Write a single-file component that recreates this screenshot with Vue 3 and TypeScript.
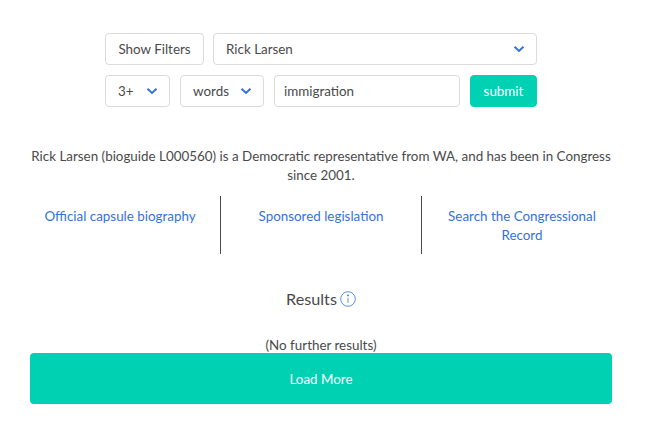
<template>
  <main class="page">
    <form class="search" @submit.prevent>
      <div class="row">
        <button type="button" class="btn filters">Show Filters</button>
        <div class="select grow">
          <span>Rick Larsen</span>
          <svg class="chev" viewBox="0 0 12 8"><path d="M1.5 1.8 6 6l4.5-4.2" /></svg>
        </div>
      </div>
      <div class="row wide">
        <div class="select count">
          <span>3+</span>
          <svg class="chev" viewBox="0 0 12 8"><path d="M1.5 1.8 6 6l4.5-4.2" /></svg>
        </div>
        <div class="select unit">
          <span>words</span>
          <svg class="chev" viewBox="0 0 12 8"><path d="M1.5 1.8 6 6l4.5-4.2" /></svg>
        </div>
        <div class="input grow">immigration</div>
        <button type="submit" class="btn submit">submit</button>
      </div>
    </form>

    <p class="bio">
      Rick Larsen (bioguide L000560) is a Democratic representative from WA, and has been in Congress since 2001.
    </p>

    <nav class="links">
      <a v-for="link in links" :key="link" href="#" class="link">{{ link }}</a>
    </nav>

    <h2 class="results">
      Results
      <svg class="info" viewBox="0 0 16 16">
        <circle cx="8" cy="8" r="7.3" />
        <path d="M8 6.8v5" />
        <circle class="dot" cx="8" cy="4.4" r="0.9" />
      </svg>
    </h2>

    <p class="none">(No further results)</p>
    <button type="button" class="more">Load More</button>
  </main>
</template>

<script setup lang="ts">
const links: string[] = [
  'Official capsule biography',
  'Sponsored legislation',
  'Search the Congressional Record',
]
</script>

<style>
body {
  background: #fff;
}
</style>

<style scoped>
.page {
  box-sizing: border-box;
  width: 654px;
  height: 424px;
  padding: 33px 42px 0 30px;
  font-family: Lato, "Open Sans", sans-serif;
  font-size: 13.4px;
  color: #4a4a4a;
}

.search {
  width: 432px;
  margin: 0 auto;
}

.row {
  display: flex;
  gap: 9px;
  height: 32px;
  margin-bottom: 10px;
}

.row.wide {
  gap: 10px;
}

.grow {
  flex: 1;
}

.btn,
.select,
.input {
  box-sizing: border-box;
  display: flex;
  align-items: center;
  height: 32px;
  border: 1px solid #dbdbdb;
  border-radius: 4px;
  background: #fff;
  font: inherit;
  color: #4a4a4a;
}

.btn {
  justify-content: center;
  padding: 0;
}

.filters {
  width: 99px;
}

.select {
  justify-content: space-between;
  padding: 0 11px 0 12px;
}

.count {
  width: 65px;
}

.unit {
  width: 84px;
}

.input {
  padding: 0 9px;
}

.submit {
  width: 67px;
  border-color: #00d1b2;
  background: #00d1b2;
  color: #fff;
}

.chev {
  width: 12px;
  height: 8px;
  fill: none;
  stroke: #3273dc;
  stroke-width: 2;
}

.bio {
  margin: 40px 0 0;
  text-align: center;
  line-height: 19px;
}

.links {
  display: grid;
  grid-template-columns: 190px 1fr 191px;
  margin-top: 11px;
  height: 58px;
}

.link {
  padding: 11px 12px 0;
  text-align: center;
  line-height: 19px;
  color: #3273dc;
  text-decoration: none;
}

.link:first-child {
  padding-right: 22px;
}

.link:last-child {
  padding-left: 22px;
}

.link + .link {
  border-left: 1px solid #4a4a4a;
}

.results {
  display: flex;
  justify-content: center;
  align-items: center;
  gap: 3px;
  margin: 34px 0 0;
  font-size: 16.2px;
  font-weight: 400;
  line-height: 22px;
}

.info {
  width: 16px;
  height: 16px;
  fill: none;
  stroke: #3273dc;
  stroke-width: 0.8;
}

.dot {
  fill: #3273dc;
  stroke: none;
}

.none {
  margin: 27px 0 0;
  text-align: center;
  line-height: 16px;
}

.more {
  display: block;
  width: 100%;
  height: 51px;
  border: 0;
  border-radius: 4px;
  background: #00d1b2;
  color: #fff;
  font: inherit;
}
</style>
